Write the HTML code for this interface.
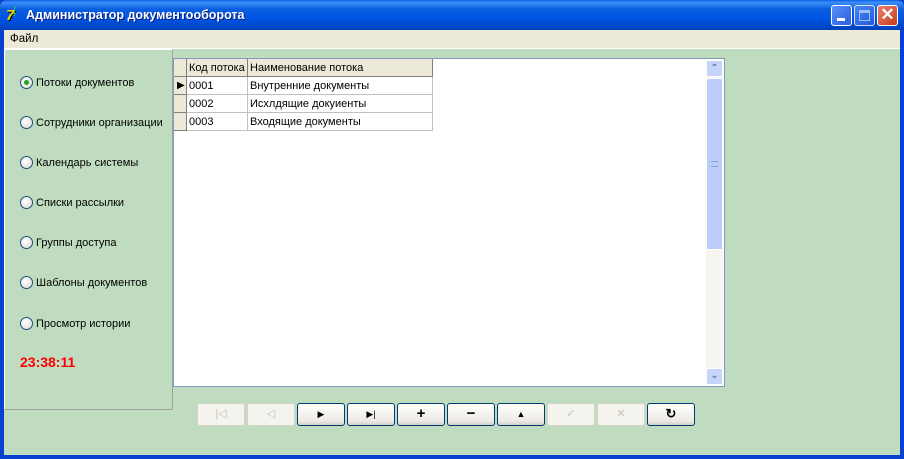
<!DOCTYPE html>
<html><head><meta charset="utf-8"><style>
*{margin:0;padding:0;box-sizing:border-box}
body{width:904px;height:459px;overflow:hidden;font-family:"Liberation Sans",sans-serif;font-size:11px;background:#0841d0;position:relative}
.abs{position:absolute}
#title{left:0;top:0;width:904px;height:30px;background:linear-gradient(#0a5fe8 0%,#3d8ff7 8%,#0a5fe0 30%,#0054e3 60%,#0047c8 90%,#003fb5 100%);border-radius:7px 7px 0 0}
#title .t{left:26px;top:8px;color:#fff;font-weight:bold;font-size:12.5px;text-shadow:1px 1px #0a1f80}
.wb{top:5px;width:21px;height:21px;border:1px solid #fff;border-radius:3px;background:linear-gradient(135deg,#5a8ff8,#2a5ee0)}
#menu{left:4px;top:30px;width:896px;height:19px;background:#ece9d8;border-bottom:1px solid #fff}
#menu span{position:absolute;left:6px;top:3px;font-size:11.5px}
#client{left:4px;top:49px;width:896px;height:406px;background:#c0dcc0}
#left{left:4px;top:49px;width:169px;height:361px;border-left:1px solid #fff;border-top:1px solid #fff;border-right:1px solid #a0a0a0;border-bottom:1px solid #a0a0a0}
.r{position:absolute;left:16px;font-size:11px;color:#000;white-space:nowrap}
.r i{display:inline-block;width:13px;height:13px;border-radius:50%;border:1px solid #1c5180;background:radial-gradient(circle at 40% 40%,#fff,#dcd9cf);vertical-align:-3px;margin-right:3px;position:relative}
.r i b{position:absolute;left:3px;top:3px;width:5px;height:5px;border-radius:50%;background:#21a121}
#clock{left:20px;top:354px;color:#f00;font-weight:bold;font-size:14px}
#grid{left:173px;top:58px;width:552px;height:329px;background:#fff;border:1px solid #7f9db9}
.c{position:absolute;height:18px;border-right:1px solid #c0c0c0;border-bottom:1px solid #c0c0c0;padding:3px 0 0 2px;white-space:nowrap;overflow:hidden}
.h{background:#ece9d8;border-right:1px solid #808080;border-bottom:1px solid #808080}
#sb{left:706px;top:60px;width:17px;height:325px;background:#f6f5ef}
.btn{position:absolute;top:403px;width:48px;height:23px;border:1px solid #003c74;border-radius:3px;background:linear-gradient(#fff,#ecebe6 80%,#d6d0c5);text-align:center;font-size:11px;line-height:20px}
.dis{border-color:#d8d4c8;background:#f4f3ee;color:#c5c2b2}
</style></head><body>
<div id="title" class="abs">
<div class="abs" style="left:6px;top:7px;color:#ffd200;font-weight:bold;font-size:15px;font-style:italic;text-shadow:1px 1px #000">7</div>
<div class="abs" style="left:13px;top:6px;color:#3c3;font-size:10px">ʄ</div>
<div class="t abs">Администратор документооборота</div>
<div class="wb abs" style="left:831px"><div class="abs" style="left:5px;top:12px;width:8px;height:3px;background:#fff"></div></div>
<div class="wb abs" style="left:854px;opacity:.8"><div class="abs" style="left:4px;top:4px;width:11px;height:11px;border:1px solid #c8d8ff;border-top-width:3px"></div></div>
<div class="wb abs" style="left:877px;background:linear-gradient(135deg,#e8826a,#c83c1c);color:#fff;font-size:17px;font-weight:bold;line-height:18px;text-align:center">✕</div>
</div>
<div id="menu" class="abs"><span>Файл</span></div>
<div id="client" class="abs"></div>
<div id="left" class="abs"></div>
<div class="r" style="top:76px;left:20px"><i><b></b></i>Потоки документов</div>
<div class="r" style="top:116px;left:20px"><i></i>Сотрудники организации</div>
<div class="r" style="top:156px;left:20px"><i></i>Календарь системы</div>
<div class="r" style="top:196px;left:20px"><i></i>Списки рассылки</div>
<div class="r" style="top:236px;left:20px"><i></i>Группы доступа</div>
<div class="r" style="top:276px;left:20px"><i></i>Шаблоны документов</div>
<div class="r" style="top:317px;left:20px"><i></i>Просмотр истории</div>
<div id="clock" class="abs">23:38:11</div>
<div id="grid" class="abs">
<div class="c h" style="left:0;top:0;width:13px"></div>
<div class="c h" style="left:13px;top:0;width:61px">Код потока</div>
<div class="c h" style="left:74px;top:0;width:185px">Наименование потока</div>
<div class="c h" style="left:0;top:18px;width:13px;padding:3px 0 0 3px;font-size:10px">▶</div>
<div class="c" style="left:13px;top:18px;width:61px">0001</div>
<div class="c" style="left:74px;top:18px;width:185px">Внутренние документы</div>
<div class="c h" style="left:0;top:36px;width:13px"></div>
<div class="c" style="left:13px;top:36px;width:61px">0002</div>
<div class="c" style="left:74px;top:36px;width:185px">Исхлдящие докуиенты</div>
<div class="c h" style="left:0;top:54px;width:13px"></div>
<div class="c" style="left:13px;top:54px;width:61px">0003</div>
<div class="c" style="left:74px;top:54px;width:185px">Входящие документы</div>
</div>
<div id="sb" class="abs">
<div class="abs" style="left:0;top:0;width:17px;height:17px;background:#c4d4fb;border:1px solid #fff;border-radius:2px;color:#4d6185;font-size:10px;text-align:center;line-height:15px">⌃</div>
<div class="abs" style="left:0;top:18px;width:17px;height:172px;background:#bccdf9;border:1px solid #fff;border-radius:2px"><div class="abs" style="left:4px;top:82px;width:7px;height:6px;border-top:1px solid #8aa0d8;border-bottom:1px solid #8aa0d8"></div></div>
<div class="abs" style="left:0;top:308px;width:17px;height:17px;background:#c4d4fb;border:1px solid #fff;border-radius:2px;color:#4d6185;font-size:10px;text-align:center;line-height:13px">⌄</div>
</div>
<div class="btn dis" style="left:197px">|◁</div>
<div class="btn dis" style="left:247px">◁</div>
<div class="btn" style="left:297px;font-size:9px">▶</div>
<div class="btn" style="left:347px;font-size:9px">▶|</div>
<div class="btn" style="left:397px;font-weight:bold;font-size:15px">+</div>
<div class="btn" style="left:447px;font-weight:bold;font-size:15px">−</div>
<div class="btn" style="left:497px;font-size:9px">▲</div>
<div class="btn dis" style="left:547px">✓</div>
<div class="btn dis" style="left:597px">✕</div>
<div class="btn" style="left:647px;font-weight:bold;font-size:13px">↻</div>
</body></html>
